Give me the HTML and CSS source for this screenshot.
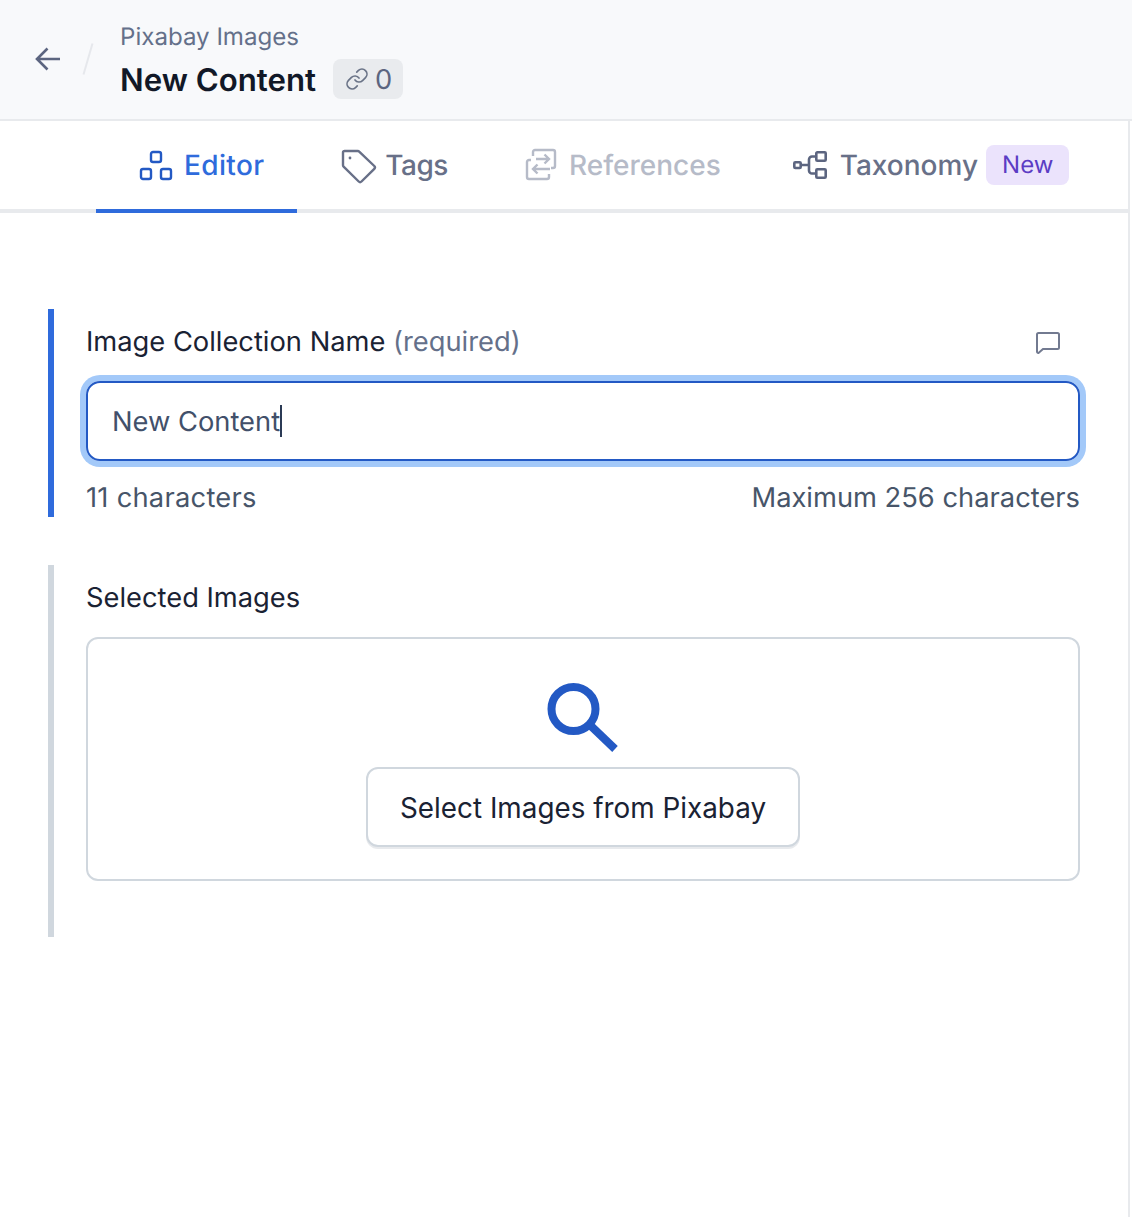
FILE: index.html
```html
<!DOCTYPE html>
<html>
	<head>
		<meta charset="UTF-8">
		<title>New Content</title>
		<link rel="stylesheet" href="styles.css">
	</head>
	<body>
		<header class="topbar">
			<svg class="back" width="24" height="24" viewBox="0 0 24 24"><path d="M24 12H1.5M11.5 1.500 1 12l10.500 10.500"/></svg>
			<svg class="slash" width="10" height="32" viewBox="0 0 10 32"><path d="M9.500 .5 .5 31.500"/></svg>
			<div class="titles">
				<div class="crumb">Pixabay Images</div>
				<div class="title-row">
					<h1>New Content</h1>
					<span class="ref-count">
						<svg width="24" height="24" viewBox="0 0 24 24"><path d="M10 13a5 5 0 0 0 7.540.54l3-3a5 5 0 0 0-7.070-7.070l-1.720 1.710"/><path d="M14 11a5 5 0 0 0-7.540-.54l-3 3a5 5 0 0 0 7.070 7.070l1.710-1.710"/></svg>
						0
					</span>
				</div>
			</div>
		</header>
		<div class="main">
			<nav class="tabs">
				<a class="tab active">
					<svg width="36" height="36" viewBox="0 0 36 36"><rect x="13" y="5" width="10" height="10" rx="2"/><rect x="3" y="22" width="10" height="10" rx="2"/><rect x="23" y="22" width="10" height="10" rx="2"/></svg>
					Editor
				</a>
				<a class="tab tab-tags">
					<svg width="36" height="36" viewBox="0 0 36 36"><path d="M5.500 4H18.800a2 2 0 0 1 1.400.6L35.300 19a2 2 0 0 1 0 2.800L22.500 34.500a2 2 0 0 1-2.800 0L4.600 19.700A2 2 0 0 1 4 18.300V5.500A1.500 1.500 0 0 1 5.500 4z"/><circle class="dot" cx="11" cy="11" r="1.400"/></svg>
					Tags
				</a>
				<a class="tab disabled">
					<svg width="36" height="36" viewBox="0 0 36 36"><path d="M10 9V5a2 2 0 0 1 2-2h18a2 2 0 0 1 2 2v14a2 2 0 0 1-2 2h-2"/><path d="M8 13H6a2 2 0 0 0-2 2v15a2 2 0 0 0 2 2h18a2 2 0 0 0 2-2v-3"/><path d="M13 12h13m-4.500-4.500L26 12l-4.500 4.500M27 22H10m4.500-4.500L10 22l4.500 4.500"/></svg>
					References
				</a>
				<a class="tab tab-last">
					<svg width="36" height="36" viewBox="0 0 36 36"><rect x=".3" y="15.300" width="6.400" height="5.700" rx="1"/><rect x="22.300" y="5.300" width="9.400" height="8.400" rx="1"/><rect x="22.300" y="22.300" width="9.400" height="8.400" rx="1"/><path d="M7 18h8M22 9.500h-4a3 3 0 0 0-3 3v11a3 3 0 0 0 3 3h4"/></svg>
					Taxonomy
					<span class="new-badge">New</span>
				</a>
			</nav>
			<div class="form">
				<section class="field field-active">
					<div class="label-row">
						<label>Image Collection Name <span class="muted">(required)</span></label>
						<svg class="comment" width="24" height="22" viewBox="0 0 24 22"><path d="M2.500 1h19A1.500 1.500 0 0 1 23 2.500v13a1.500 1.500 0 0 1-1.500 1.500H7l-4.500 4H2.200A1.200 1.200 0 0 1 1 19.800V2.500A1.500 1.500 0 0 1 2.500 1z"/></svg>
					</div>
					<div class="input"><span>New Content</span><i class="caret"></i></div>
					<div class="hints">
						<span class="count">11 characters</span>
						<span>Maximum 256 characters</span>
					</div>
				</section>
				<section class="field">
					<div class="label-row">
						<label>Selected Images</label>
					</div>
					<div class="picker">
						<svg class="search" width="70" height="70" viewBox="0 0 70 70"><circle cx="25.500" cy="26" r="22"/><path d="M43 43 67 66"/></svg>
						<button class="pick-btn">Select Images from Pixabay</button>
					</div>
				</section>
			</div>
		</div>
	</body>
</html>
```

FILE: styles.css
```css
* {
	box-sizing: border-box;
}
body {
	margin: 0;
	background: #fff;
	font-family: Inter, "Liberation Sans", sans-serif;
	font-size: 27.3px;
	color: #1a2233;
	text-rendering: geometricPrecision;
}
svg {
	display: block;
	flex: none;
	fill: none;
	overflow: visible;
}
.topbar {
	display: flex;
	align-items: center;
	height: 121px;
	padding-left: 36px;
	background: #f8f9fb;
	border-bottom: 2px solid #e8eaed;
}
.back {
	margin-top: -2px;
	stroke: #5c6580;
	stroke-width: 2.600;
}
.slash {
	margin-left: 23px;
	margin-top: -2px;
	stroke: #e6e8ec;
	stroke-width: 2;
}
.titles {
	margin-left: 27px;
	padding-top: 1px;
}
.crumb {
	font-size: 24.1px;
	line-height: 32px;
	color: #64708a;
}
.title-row {
	display: flex;
	align-items: center;
	gap: 17px;
	margin-top: 6px;
}
h1 {
	margin: 0;
	height: 40px;
	padding-top: 1px;
	font-size: 31.2px;
	line-height: 40px;
	font-weight: 600;
	color: #111827;
}
.ref-count {
	display: flex;
	align-items: center;
	gap: 6px;
	height: 40px;
	padding: 0 11px 0 12px;
	border-radius: 8px;
	background: #e9ebee;
	color: #5c6580;
}
.ref-count svg {
	stroke: #6b7488;
	stroke-width: 1.700;
	stroke-linecap: round;
}
.main {
	width: 1130px;
	min-height: 1096px;
	border-right: 2px solid #e8eaed;
}
.tabs {
	display: flex;
	height: 92px;
	padding-left: 96px;
	border-bottom: 4px solid #e8eaed;
}
.tab {
	display: flex;
	align-items: center;
	gap: 10px;
	height: 92px;
	padding: 0 31px 0 42px;
	border-bottom: 4px solid transparent;
	font-size: 28px;
	font-weight: 500;
	color: #687088;
}
.tab svg {
	stroke: #687088;
	stroke-width: 2.400;
}
.tab .dot {
	fill: #687088;
	stroke: none;
}
.tab.active {
	padding-right: 33px;
	letter-spacing: .35px;
	color: #2f6bdc;
	border-bottom-color: #2f6bdc;
}
.tab.active svg {
	stroke: #2359c4;
}
.tab-tags {
	padding-right: 33px;
	letter-spacing: -.5px;
}
.tab.disabled {
	color: #b6bbc8;
}
.tab.disabled svg {
	stroke: #b6bbc8;
}
.tab-last {
	padding-right: 0;
}
.tab-last svg {
	stroke: #5c6580;
	stroke-width: 2.600;
}
.new-badge {
	margin-left: -2px;
	padding: 0 16px;
	height: 40px;
	line-height: 40px;
	border-radius: 8px;
	background: #ebe3fc;
	font-size: 24px;
	font-weight: 400;
	color: #5b3cc4;
}
.form {
	padding: 96px 48px 0;
}
.field {
	padding: 12px 0 0 32px;
	border-left: 6px solid #d0d7de;
}
.field + .field {
	margin-top: 48px;
	padding-bottom: 56px;
}
.field-active {
	border-left-color: #2f6bdc;
}
.label-row {
	display: flex;
	align-items: center;
	justify-content: space-between;
	height: 40px;
	padding-top: 2px;
	line-height: 40px;
	margin-bottom: 20px;
}
.muted {
	color: #64708a;
}
.comment {
	margin-right: 20px;
	margin-top: 1px;
	stroke: #727a90;
	stroke-width: 2;
}
.input {
	display: flex;
	align-items: center;
	height: 80px;
	padding-left: 24px;
	border: 2px solid #2359c4;
	border-radius: 14px;
	box-shadow: 0 0 0 6px #a3c9f9;
	color: #42506a;
}
.caret {
	width: 2px;
	height: 32px;
	background: #2b3a55;
}
.hints {
	display: flex;
	justify-content: space-between;
	height: 40px;
	margin-top: 16px;
	line-height: 42px;
	color: #475569;
}
.count {
	letter-spacing: .25px;
}
.picker {
	display: flex;
	flex-direction: column;
	align-items: center;
	height: 244px;
	padding-top: 44px;
	border: 2px solid #d0d7de;
	border-radius: 12px;
}
.search {
	stroke: #2359c4;
	stroke-width: 8;
}
.pick-btn {
	width: 434px;
	height: 80px;
	margin-top: 14px;
	padding-top: 2px;
	background: #fff;
	border: 2px solid #d0d7de;
	border-radius: 12px;
	box-shadow: 0 2px 0 #e8eaed;
	font: inherit;
	font-size: 27.85px;
	color: #1a2233;
}
```
